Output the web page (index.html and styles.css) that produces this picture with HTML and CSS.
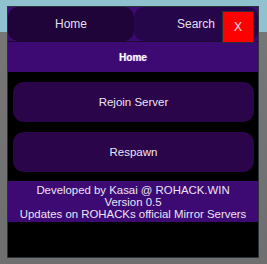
FILE: index.html
```html
<!DOCTYPE html>
<html lang="en">
<head>
    <meta charset="UTF-8">
    <title>ROHACK</title>
    <link rel="stylesheet" href="styles.css">
</head>
<body>

<div class="scene">
    <div class="panel">
        <div class="tabs">
            <div class="tab tab-active">Home</div>
            <div class="tab">Search</div>
            <button class="close">X</button>
        </div>

        <div class="title">Home</div>

        <div class="actions">
            <button class="action">Rejoin Server</button>
            <button class="action">Respawn</button>
        </div>

        <div class="footer">
            <div>Developed by Kasai @ ROHACK.WIN</div>
            <div>Version 0.5</div>
            <div>Updates on ROHACKs official Mirror Servers</div>
        </div>
    </div>
</div>

</body>
</html>
```

FILE: styles.css
```css
body {
    margin: 0;
    font-family: "Liberation Sans", Arial, sans-serif;
}
.scene {
    width: 267px;
    height: 264px;
    padding: 6px 0 0 7px;
    box-sizing: border-box;
    background: linear-gradient(#8fc2ce 0, #8fc2ce 32px, #767676 32px, #6f6f6f 100%);
}
.panel {
    width: 252px;
    height: 252px;
    box-sizing: border-box;
    border: 1px solid #2b3438;
    background-color: #000;
    display: flex;
    flex-direction: column;
}
.tabs {
    position: relative;
    display: flex;
    height: 34px;
    background-color: #3d0a74;
}
.tab {
    flex: 1;
    display: flex;
    align-items: center;
    justify-content: center;
    background-color: #25064a;
    color: #e6def0;
    font-size: 12px;
    border-radius: 10px;
}
.tab-active {
    flex: 0 0 126px;
    background-color: #1e0438;
}
.close {
    position: absolute;
    left: 214px;
    top: 4px;
    width: 32px;
    height: 32px;
    border: 1px solid #2d2d2d;
    background-color: #ff0000;
    color: #f4e6ec;
    font-family: "Liberation Sans", Arial, sans-serif;
    font-size: 12px;
    padding: 0;
}
.title {
    height: 30px;
    border-top: 1px solid #1c0a30;
    background-color: #3d0a74;
    color: #fff;
    font-size: 10px;
    font-weight: bold;
    display: flex;
    align-items: center;
    justify-content: center;
    text-shadow: 0 0 1px #8a60c0, 1px 0 0 #6a40a0;
}
.actions {
    display: flex;
    flex-direction: column;
    gap: 10px;
    padding: 10px 4px 9px 5px;
}
.action {
    height: 40px;
    border: none;
    border-radius: 11px;
    background-color: #2a0549;
    color: #ece4f4;
    font-family: "Liberation Sans", Arial, sans-serif;
    font-size: 11.5px;
}
.footer {
    height: 41px;
    box-sizing: border-box;
    padding-top: 3px;
    background-color: #3d0a74;
    color: #ece4f4;
    font-size: 11.4px;
    text-align: center;
    display: flex;
    flex-direction: column;
}
.footer div {
    height: 12px;
    line-height: 12px;
}
```
